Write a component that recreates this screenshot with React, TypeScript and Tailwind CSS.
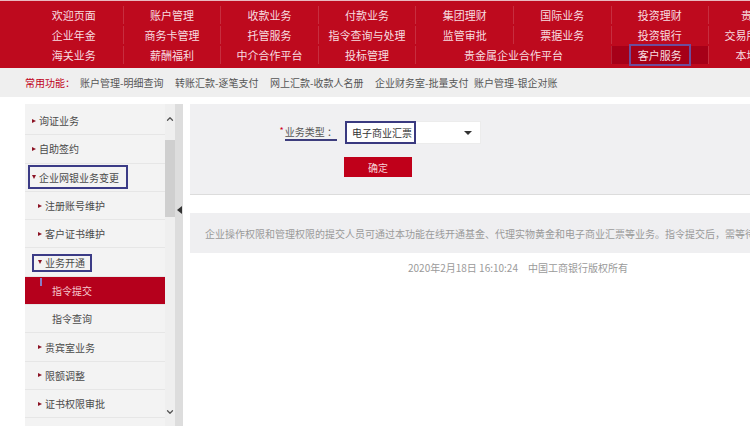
import { ChevronDown, ChevronUp } from 'lucide-react';

const navRows = [
  ['欢迎页面', '账户管理', '收款业务', '付款业务', '集团理财', '国际业务', '投资理财', '贵宾室'],
  ['企业年金', '商务卡管理', '托管服务', '指令查询与处理', '监管审批', '票据业务', '投资银行', '交易所业务区'],
];

const lastRow = [
  { label: '海关业务' },
  { label: '薪酬福利' },
  { label: '中介合作平台' },
  { label: '投标管理' },
  { label: '贵金属企业合作平台', wide: true },
  { label: '客户服务', active: true },
  { label: '本地特色' },
];

const quickLinks = [
  { label: '账户管理-明细查询', w: 'w-[95px]' },
  { label: '转账汇款-逐笔支付', w: 'w-[95px]' },
  { label: '网上汇款-收款人名册', w: 'w-[105px]' },
  { label: '企业财务室-批量支付', w: 'w-[99px]' },
  { label: '账户管理-银企对账', w: 'w-[100px]' },
];

type SideItem = {
  label: string;
  level: 0 | 1 | 2;
  bullet?: 'right' | 'down';
  active?: boolean;
  box?: 'group' | 'open';
};

const sideItems: SideItem[] = [
  { label: '询证业务', level: 0, bullet: 'right' },
  { label: '自助签约', level: 0, bullet: 'right' },
  { label: '企业网银业务变更', level: 0, bullet: 'down', box: 'group' },
  { label: '注册账号维护', level: 1, bullet: 'right' },
  { label: '客户证书维护', level: 1, bullet: 'right' },
  { label: '业务开通', level: 1, bullet: 'down', box: 'open' },
  { label: '指令提交', level: 2, active: true },
  { label: '指令查询', level: 2 },
  { label: '贵宾室业务', level: 1, bullet: 'right' },
  { label: '限额调整', level: 1, bullet: 'right' },
  { label: '证书权限审批', level: 1, bullet: 'right' },
];

function Bullet({ dir }: { dir: 'right' | 'down' }) {
  if (dir === 'down') {
    return <span className="inline-block w-0 h-0 border-x-[2.5px] border-x-transparent border-t-[4px] border-t-[#8c1324]" />;
  }
  return <span className="inline-block w-0 h-0 border-y-[2.5px] border-y-transparent border-l-[4px] border-l-[#8c1324]" />;
}

function TopNav() {
  return (
    <header className="h-[68px] bg-[#be0a1e] border-t border-[#e9b9bf] pt-[5px] pl-[25px]">
      <div className="grid grid-cols-[repeat(8,97.6px)] auto-rows-[18px] gap-y-[2px] text-[11px] text-[#f7dde0]">
        {navRows.map((row) =>
          row.map((label, i) => (
            <div
              key={label}
              className={`flex items-center justify-center whitespace-nowrap ${i > 0 ? 'border-l border-white/15' : ''}`}
            >
              {label}
            </div>
          ))
        )}
        {lastRow.map((cell, i) => (
          <div
            key={cell.label}
            className={`flex items-center justify-center whitespace-nowrap ${i > 0 ? 'border-l border-white/15' : ''} ${
              cell.wide ? 'col-span-2' : ''
            } ${cell.active ? 'bg-[#a60018]' : ''}`}
          >
            {cell.active ? (
              <span className="h-[22px] px-[7px] flex items-center border-2 border-[#6d4d9c]">{cell.label}</span>
            ) : (
              cell.label
            )}
          </div>
        ))}
      </div>
    </header>
  );
}

function QuickBar() {
  return (
    <div className="h-[29px] bg-[#efefef] flex items-center pl-[25px] text-[10px] text-[#555] whitespace-nowrap">
      <span className="w-[55px] text-[#c0001a]">常用功能：</span>
      {quickLinks.map((l) => (
        <span key={l.label} className={l.w}>
          {l.label}
        </span>
      ))}
    </div>
  );
}

function Sidebar() {
  return (
    <div className="flex h-full">
      <nav className="w-[140px] bg-[#f3f3f3] pt-[3px] text-[10px] text-[#4a4a4a]">
        {sideItems.map((item) => {
          const pad = item.level === 0 ? 'pl-[7px]' : item.level === 1 ? 'pl-[13px]' : 'pl-[27px]';
          return (
            <div
              key={item.label}
              className={`relative h-[28.3px] flex items-center gap-[3px] border-b border-[#e6e6e6] ${pad} ${
                item.active ? 'bg-[#b5001c] text-[#f6c9cf]' : ''
              }`}
            >
              {item.bullet && <Bullet dir={item.bullet} />}
              <span className="whitespace-nowrap">{item.label}</span>
              {item.box === 'group' && (
                <span className="absolute left-[3px] top-[1px] w-[100px] h-[24px] border-2 border-[#3b3b86]" />
              )}
              {item.box === 'open' && (
                <span className="absolute left-[7px] top-[6px] w-[60px] h-[18px] border-2 border-[#3b3b86]" />
              )}
              {item.active && <span className="absolute left-[15px] top-[1px] w-[2px] h-[8px] bg-[#8a7cc4]" />}
            </div>
          );
        })}
      </nav>

      <div className="w-[10px] bg-[#efefef] flex flex-col items-center">
        <div className="h-[30px] flex items-center">
          <ChevronUp className="w-[10px] h-[10px] text-[#555]" strokeWidth={3} />
        </div>
        <div className="mt-[6px] w-full h-[77px] bg-[#cfcfcf]" />
        <div className="flex-1" />
        <div className="h-[20px] mb-[4px] flex items-center">
          <ChevronDown className="w-[10px] h-[10px] text-[#555]" strokeWidth={3} />
        </div>
      </div>

      <div className="w-[8px] bg-[#f7f7f7] bg-[radial-gradient(circle,#cfcfcf_0.6px,transparent_0.9px)] bg-[length:2px_2px] pt-[102px] flex justify-center">
        <span className="w-0 h-0 border-y-[4px] border-y-transparent border-r-[5px] border-r-[#333]" />
      </div>
    </div>
  );
}

function MainPanel() {
  return (
    <main className="ml-[7px] w-[648px] shrink-0 flex flex-col text-[10px]">
      <section className="h-[91px] bg-[#f0f0f2] border-b border-[#dcdcdc] pt-[17px]">
        <div className="flex items-center h-[23px]">
          <label className="w-[147px] flex justify-end items-center text-[#555] whitespace-nowrap">
            <span className="text-[#d0021b] text-[9px] mr-[1px] -mt-[4px]">*</span>
            <span className="border-b-2 border-[#3d3d7d] leading-[14px]">业务类型 ：</span>
          </label>
          <div className="relative ml-[8px] w-[136px] h-[23px] bg-white border border-[#ececec] flex items-center justify-between pl-[6px] pr-[8px]">
            <span className="text-[10px] text-[#333]">电子商业汇票</span>
            <span className="w-0 h-0 border-x-[4px] border-x-transparent border-t-[4px] border-t-[#333]" />
            <span className="absolute -left-px -top-px w-[71px] h-[23px] border-2 border-[#3a3a80]" />
          </div>
        </div>
        <button className="mt-[13px] ml-[154px] w-[68px] h-[20px] bg-[#c0001a] text-[#f6d0d5] text-[10px] flex items-center justify-center">
          确定
        </button>
      </section>

      <section className="mt-[18px] h-[40px] bg-[#efeff1] flex items-center pl-[15px] text-[#9a9a9a] whitespace-nowrap overflow-hidden">
        企业操作权限和管理权限的提交人员可通过本功能在线开通基金、代理实物黄金和电子商业汇票等业务。指令提交后，需等待授权人员授权后方可生效。
      </section>

      <footer className="mt-[7px] h-[14px] flex items-center text-[#9a9a9a] whitespace-nowrap pl-[218px]">
        <span>2020年2月18日 16:10:24</span>
        <span className="ml-[10px]">中国工商银行版权所有</span>
      </footer>
    </main>
  );
}

export default function App() {
  return (
    <div className="w-[750px] h-[426px] overflow-hidden bg-white font-['Noto_Sans_CJK_SC','Noto_Sans',sans-serif]">
      <TopNav />
      <QuickBar />
      <div className="flex mt-[7px] h-[322px]">
        <div className="w-[25px] shrink-0" />
        <div className="shrink-0">
          <Sidebar />
        </div>
        <MainPanel />
      </div>
    </div>
  );
}
